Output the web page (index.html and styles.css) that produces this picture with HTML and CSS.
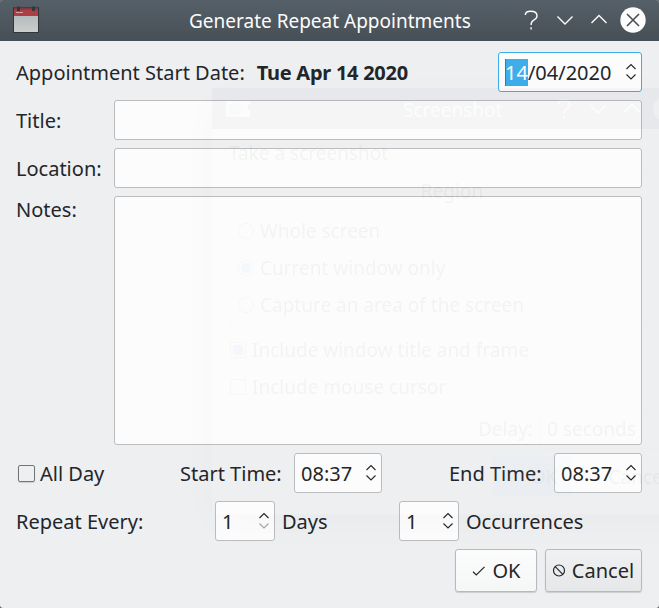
FILE: index.html
```html
<!DOCTYPE html>
<html lang="en">
<head>
<meta charset="utf-8">
<title>Generate Repeat Appointments</title>
<link rel="stylesheet" href="styles.css">
</head>
<body>
<svg class="defs" aria-hidden="true">
  <symbol id="help" viewBox="0 0 26 26"><path d="M7.3 8C7.3 5.300 9.200 4.300 12.800 4.300C16.800 4.300 19 6 19 8.900C19 11.300 17.200 12.300 15.400 13.300C13.600 14.300 13.100 15.200 13.100 18"/><path d="M13.1 20.300V22.500"/></symbol>
  <symbol id="down" viewBox="0 0 26 26"><path d="M5.5 9.500L13 17L20.5 9.500"/></symbol>
  <symbol id="up" viewBox="0 0 26 26"><path d="M5.5 16L13 8.500L20.5 16"/></symbol>
  <symbol id="arrows" viewBox="0 0 12 18"><path d="M1.5 6L6 1.5L10.5 6"/><path class="lower" d="M1.5 11.5L6 16L10.5 11.5"/></symbol>
</svg>
<div class="dialog">
  <header class="titlebar">
    <svg class="calendar" viewBox="0 0 28 28">
      <defs><linearGradient id="page" x2="0" y2="1"><stop stop-color="#aab2b1"/><stop offset="1" stop-color="#cbcfce"/></linearGradient></defs>
      <rect x="1.5" y="1.5" width="25" height="25" fill="url(#page)" stroke="#30363b"/>
      <path d="M2 2H26V10H2Z" fill="#ad3e46"/><path d="M2 1.500H26V3.500H2Z" fill="#7e3940"/>
      <path d="M4 6.500H11" stroke="#d8a0a4"/><path d="M6.500 0.500V5M21.500 0.500V5" stroke="#343639" stroke-width="3"/>
    </svg>
    <h1>Generate Repeat Appointments</h1>
    <nav class="controls">
      <svg><use href="#help"/></svg><svg><use href="#down"/></svg><svg><use href="#up"/></svg>
      <svg class="close" viewBox="0 0 26 26"><circle cx="13" cy="13" r="12.7"/><path d="M7 7L19 19M19 7L7 19"/></svg>
    </nav>
  </header>
  <main class="form">
    <div class="row date-row"><span class="label">Appointment Start Date:</span><b>Tue Apr 14 2020</b>
      <div class="spin focus"><span><mark>14</mark>/04/2020</span><svg><use href="#arrows"/></svg></div></div>
    <div class="row"><span class="label name">Title:</span><div class="field"></div></div>
    <div class="row"><span class="label name">Location:</span><div class="field"></div></div>
    <div class="row notes"><span class="label name">Notes:</span><div class="field"></div></div>
    <div class="row"><i class="check"></i><span class="all-day">All Day</span>
      <span class="start">Start Time:</span><div class="spin time"><span>08:37</span><svg><use href="#arrows"/></svg></div>
      <span class="end">End Time:</span><div class="spin time"><span>08:37</span><svg><use href="#arrows"/></svg></div></div>
    <div class="row"><span class="repeat">Repeat Every:</span><div class="spin count"><span>1</span><svg class="at-min"><use href="#arrows"/></svg></div>
      <span class="days">Days</span><div class="spin count"><span>1</span><svg><use href="#arrows"/></svg></div><span class="occurrences">Occurrences</span></div>
    <div class="buttons">
      <div class="button ok"><svg viewBox="0 0 14 14"><path d="M1 7.8L4.3 11L12.5 2.8"/></svg><span>OK</span></div>
      <div class="button cancel"><svg viewBox="0 0 14 14"><circle cx="7" cy="6.500" r="5.500"/><path d="M3.200 2.700L10.800 10.300"/></svg><span>Cancel</span></div>
    </div>
  </main>
  <section class="ghost" aria-hidden="true">
    <header class="ghost-title"><svg class="camera" viewBox="0 0 24 16"><path fill="#fff" d="M0 0H24V3H22V9H24V16H0Z"/><circle cx="9" cy="8" r="6" fill="#7cb4de"/></svg>
      <h2>Screenshot</h2>
      <nav class="controls"><svg><use href="#help"/></svg><svg><use href="#down"/></svg><svg><use href="#up"/></svg><svg class="close" viewBox="0 0 26 26"><circle cx="13" cy="13" r="12.7"/></svg></nav></header>
    <div class="ghost-body">
      <p>Take a screenshot</p>
      <div class="group"><p class="region">Region</p>
        <p class="option"><i></i>Whole screen</p><p class="option"><i class="on"></i>Current window only</p><p class="option"><i></i>Capture an area of the screen</p></div>
      <p class="option box"><i class="on"></i>Include window title and frame</p>
      <p class="option box"><i></i>Include mouse cursor</p>
      <div class="delay"><span>Delay:</span><div>0 seconds</div></div>
      <div class="ghost-buttons"><div class="default">OK</div><div>Cancel</div></div>
    </div>
  </section>
</div>
</body>
</html>
```
FILE: styles.css
```css
* { box-sizing: border-box; }
body { margin: 0; font: 20px/28px "Noto Sans", sans-serif; color: #232629; background: #4d565d; }
h1, h2, p { margin: 0; font-size: inherit; font-weight: 400; }
svg { flex: none; fill: none; stroke: currentColor; }
.defs { position: absolute; width: 0; height: 0; }
.dialog { position: relative; width: 659px; height: 608px; overflow: hidden; background: #eeeff1; border-radius: 3px; display: flex; flex-direction: column; white-space: nowrap; }
.titlebar { height: 41px; flex: none; display: flex; align-items: center; padding: 0 13px 1px 12px; color: #fcfcfc; background: linear-gradient(#566068, #474f56); }
.calendar { width: 28px; height: 28px; stroke: none; }
h1 { margin-left: 149px; padding-top: 2px; font-size: 19px; }
.controls { display: flex; gap: 8px; margin-left: auto; }
.controls svg { width: 26px; height: 26px; stroke-width: 1.4; }
.controls .close { fill: #fcfcfc; stroke: none; }
.controls .close path { stroke: #474f56; stroke-width: 1.6; }
.form { padding: 11px 17px 0 16px; display: flex; flex-direction: column; gap: 8px; }
.row { display: flex; align-items: center; height: 40px; }
.row > span, b { padding-top: 2px; }
.name { width: 98px; flex: none; }
.field { flex: 1; align-self: stretch; }
.field, .spin { background: #fcfcfc; border: 1px solid #babcbe; border-radius: 3px; }
.notes { height: 249px; align-items: flex-start; }
.notes > .name { padding-top: 0; }
b { margin-left: 12px; font-weight: 700; letter-spacing: -.27px; }
.spin { height: 40px; flex: none; display: flex; align-items: center; justify-content: space-between; padding: 0 4px 0 6px; }
.spin span { padding-top: 2px; }
.spin svg { width: 12px; height: 18px; stroke-width: 1.1; }
.lower { opacity: var(--lower, 1); }
.at-min { --lower: .4; }
.focus { width: 144px; margin-left: auto; border-color: #3daee9; }
.focus mark { background: #3daee9; color: #fcfcfc; box-shadow: inset 1px 0 #a65a32; }
.time { width: 88px; }
.count { width: 60px; }
.check { width: 17px; height: 17px; border: 1px solid #727578; border-radius: 2px; margin-left: 2px; box-shadow: 0 1px 1px #ccc; }
.all-day { margin-left: 5px; width: 140px; }
.start { width: 114px; }
.end { width: 105px; margin-left: 67px; }
.repeat { width: 199px; }
.days { width: 117px; margin-left: 7px; }
.occurrences { margin-left: 7px; }
.buttons { display: flex; justify-content: flex-end; gap: 8px; }
.button { height: 43px; display: flex; align-items: center; justify-content: center; border: 1px solid #b7b9bb; border-radius: 3px; box-shadow: 0 1px 1px #ccced0; background: linear-gradient(#fcfcfc, #f5f6f6); }
.button span { padding-top: 1px; }
.button svg { width: 14px; height: 14px; stroke-width: 1.2; }
.ok { width: 82px; gap: 7px; }
.cancel { width: 97px; gap: 6px; padding-right: 1px; background: linear-gradient(#f0f1f2, #e6e7e9); }
.ghost { position: absolute; left: 212px; top: 88px; width: 480px; height: 426px; opacity: .04; font-size: 19px; box-shadow: 0 10px 40px 0 #0008; pointer-events: none; }
.ghost-title { height: 41px; background: #4d565e; color: #fff; display: flex; align-items: center; padding: 0 13px 0 14px; }
.ghost-title h2 { margin-left: 153px; padding-top: 2px; }
.camera { width: 24px; height: 16px; stroke: none; }
.ghost-body { padding: 10px 17px 0; display: flex; flex-direction: column; }
.group { height: 154px; margin-top: 6px; border: 1px solid #bbb; border-radius: 3px; padding: 3px 8px; }
.region { text-align: center; height: 35px; }
.option { height: 37px; display: flex; align-items: center; gap: 6px; }
.option i { width: 16px; height: 16px; border: 1px solid #777; border-radius: 50%; }
.option .on { background: #3d9ee9; background-clip: content-box; padding: 2px; }
.box { margin-top: 4px; padding-left: 1px; }
.box + .box { margin-top: 0; }
.box i { border-radius: 2px; }
.delay { display: flex; align-items: center; height: 40px; margin: 4px 0 0 249px; }
.delay span { width: 62px; }
.delay div { flex: 1; height: 39px; padding: 4px 6px; border: 1px solid #bbb; }
.ghost-buttons { display: flex; gap: 8px; margin: 7px 0 0 263px; }
.ghost-buttons div { height: 41px; width: 97px; padding: 6px 0 0 27px; border: 1px solid #ddd; }
.ghost-buttons .default { width: 82px; padding-left: 38px; background: #93cee9; }
```
